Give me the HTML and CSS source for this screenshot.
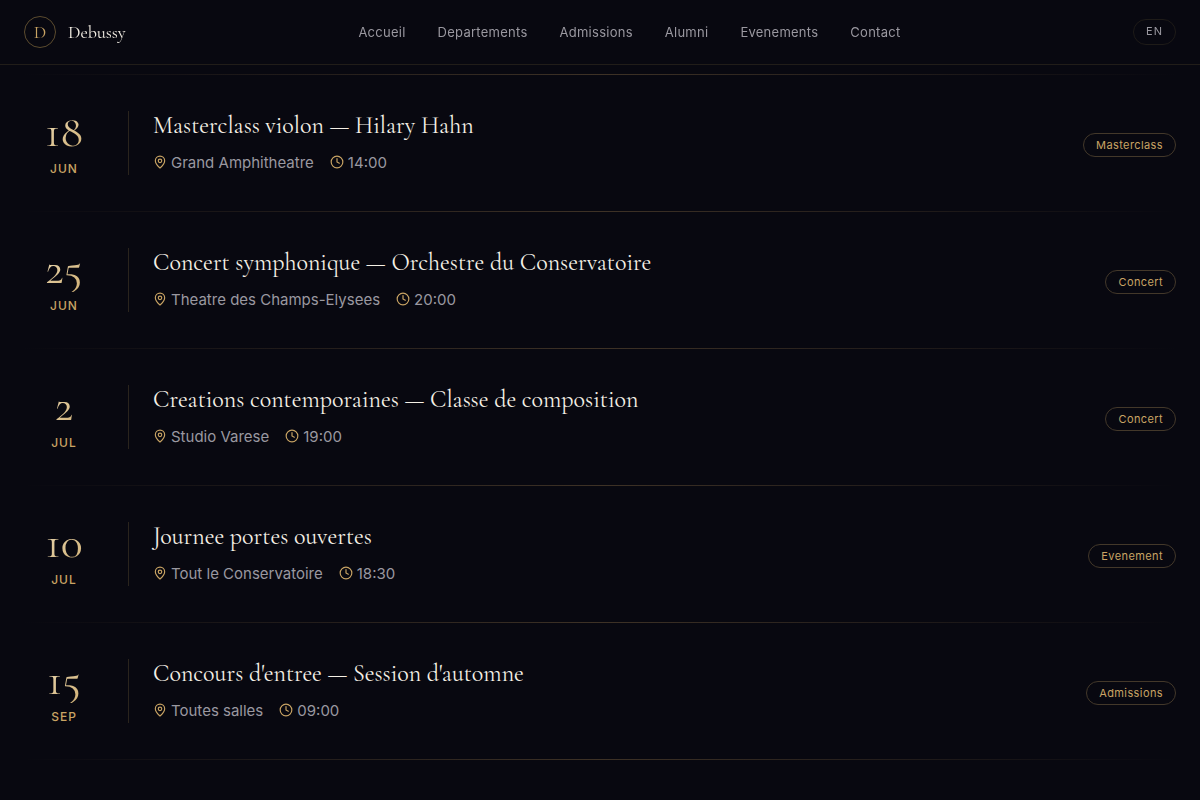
FILE: index.html
```
<!DOCTYPE html>
<html lang="fr">
<head>
<meta charset="utf-8">
<meta name="viewport" content="width=device-width, initial-scale=1">
<title>Debussy — Evenements</title>
<link rel="stylesheet" href="styles.css">
</head>
<body>
<svg class="sprite" aria-hidden="true">
  <symbol id="pin" viewBox="0 0 24 24"><path d="M20 10c0 4.993-5.539 10.193-7.399 11.799a1 1 0 0 1-1.202 0C9.539 20.193 4 14.993 4 10a8 8 0 0 1 16 0"/><circle cx="12" cy="10" r="3"/></symbol>
  <symbol id="clock" viewBox="0 0 24 24"><circle cx="12" cy="12" r="10"/><path d="M12 6v6l4 2"/></symbol>
</svg>
<header class="header">
  <a class="brand" href="#"><span class="brand-mark">D</span><span class="brand-name">Debussy</span></a>
  <nav class="nav">
    <a href="#">Accueil</a>
    <a href="#">Departements</a>
    <a href="#">Admissions</a>
    <a href="#">Alumni</a>
    <a href="#">Evenements</a>
    <a href="#">Contact</a>
  </nav>
  <button class="lang" type="button">EN</button>
</header>
<main class="events">
  <article class="event">
    <div class="date"><span class="day">18</span><span class="month">JUN</span></div>
    <div class="info">
      <h3 class="title">Masterclass violon — Hilary Hahn</h3>
      <p class="meta"><span class="fact"><svg class="icon"><use href="#pin"/></svg>Grand Amphitheatre</span><span class="fact"><svg class="icon"><use href="#clock"/></svg>14:00</span></p>
    </div>
    <span class="tag">Masterclass</span>
  </article>
  <article class="event">
    <div class="date"><span class="day">25</span><span class="month">JUN</span></div>
    <div class="info">
      <h3 class="title">Concert symphonique — Orchestre du Conservatoire</h3>
      <p class="meta"><span class="fact"><svg class="icon"><use href="#pin"/></svg>Theatre des Champs-Elysees</span><span class="fact"><svg class="icon"><use href="#clock"/></svg>20:00</span></p>
    </div>
    <span class="tag">Concert</span>
  </article>
  <article class="event">
    <div class="date"><span class="day">2</span><span class="month">JUL</span></div>
    <div class="info">
      <h3 class="title">Creations contemporaines — Classe de composition</h3>
      <p class="meta"><span class="fact"><svg class="icon"><use href="#pin"/></svg>Studio Varese</span><span class="fact"><svg class="icon"><use href="#clock"/></svg>19:00</span></p>
    </div>
    <span class="tag">Concert</span>
  </article>
  <article class="event">
    <div class="date"><span class="day">10</span><span class="month">JUL</span></div>
    <div class="info">
      <h3 class="title">Journee portes ouvertes</h3>
      <p class="meta"><span class="fact"><svg class="icon"><use href="#pin"/></svg>Tout le Conservatoire</span><span class="fact"><svg class="icon"><use href="#clock"/></svg>18:30</span></p>
    </div>
    <span class="tag">Evenement</span>
  </article>
  <article class="event">
    <div class="date"><span class="day">15</span><span class="month">SEP</span></div>
    <div class="info">
      <h3 class="title">Concours d'entree — Session d'automne</h3>
      <p class="meta"><span class="fact"><svg class="icon"><use href="#pin"/></svg>Toutes salles</span><span class="fact"><svg class="icon"><use href="#clock"/></svg>09:00</span></p>
    </div>
    <span class="tag">Admissions</span>
  </article>
</main>
</body>
</html>
```
FILE: styles.css
```
:root {
  --bg: #080810;
  --gold: #c9a464;
  --serif: "Cormorant Garamond", Cormorant, "Liberation Serif", serif;
  --sans: Inter, "Liberation Sans", sans-serif;
}
* { box-sizing: border-box; }
body {
  margin: 0;
  min-height: 100vh;
  background: var(--bg);
  color: #f5f0e6;
  font-family: var(--sans);
}
.sprite { display: none; }
.header {
  position: sticky;
  top: 0;
  z-index: 1;
  display: flex;
  align-items: center;
  justify-content: space-between;
  padding: 16px 24px;
  background: rgba(8, 8, 16, 0.85);
  backdrop-filter: blur(20px);
  border-bottom: 1px solid #211d19;
}
.brand {
  display: flex;
  align-items: center;
  gap: 12px;
  color: #f5f0e6;
  font-family: var(--serif);
  text-decoration: none;
}
.brand-mark {
  display: grid;
  place-items: center;
  width: 32px;
  height: 32px;
  border: 1px solid #5c4c2f;
  border-radius: 50%;
  color: var(--gold);
  font-size: 18px;
}
.brand-name { font-size: 18px; }
.nav { display: flex; gap: 32px; }
.nav a {
  color: #9a98a0;
  font-size: 13px;
  line-height: 20px;
  letter-spacing: 0.02em;
  text-decoration: none;
}
.lang {
  padding: 3px 12px 5px;
  border: 1px solid #1e1b18;
  border-radius: 16px;
  background: none;
  color: #9a98a0;
  font-family: var(--sans);
  font-size: 11px;
  line-height: 16px;
  letter-spacing: 1px;
}
.events {
  max-width: 1200px;
  margin: 0 auto;
  padding: 9px 24px 40px;
}
.event {
  display: grid;
  grid-template-columns: 105px 1fr auto;
  align-items: center;
  gap: 24px;
  padding: 36px 0;
  border-bottom: 1px solid;
  border-image: linear-gradient(90deg, transparent, #3e3226, transparent) 1;
}
.event:first-child { border-top: 1px solid; }
.date {
  display: flex;
  flex-direction: column;
  gap: 7px;
  padding-right: 24px;
  border-right: 1px solid #2a241d;
  text-align: center;
}
.day {
  padding-bottom: 4px;
  background: linear-gradient(135deg, #f0e4c4, #c9a464);
  background-clip: text;
  color: transparent;
  font-family: var(--serif);
  font-size: 46px;
  font-weight: 400;
  line-height: 40px;
}
.month {
  color: var(--gold);
  font-size: 12px;
  font-weight: 500;
  line-height: 13px;
  letter-spacing: 1px;
}
.title {
  margin: 0 0 10px;
  font-family: var(--serif);
  font-size: 24px;
  font-weight: 400;
  line-height: 30px;
}
.meta {
  display: flex;
  flex-wrap: wrap;
  gap: 0 16px;
  margin: 0;
  color: #9a98a0;
  font-size: 15px;
  line-height: 24px;
}
.fact { display: flex; align-items: center; gap: 4px; }
.icon {
  width: 14px;
  height: 14px;
  margin-bottom: 2px;
  fill: none;
  stroke: var(--gold);
  stroke-width: 2;
  stroke-linecap: round;
  stroke-linejoin: round;
}
.tag {
  margin-top: 4px;
  padding: 3px 12px;
  border: 1px solid #43382a;
  border-radius: 12px;
  color: var(--gold);
  font-size: 11px;
  line-height: 16px;
  letter-spacing: 0.4px;
}
```
